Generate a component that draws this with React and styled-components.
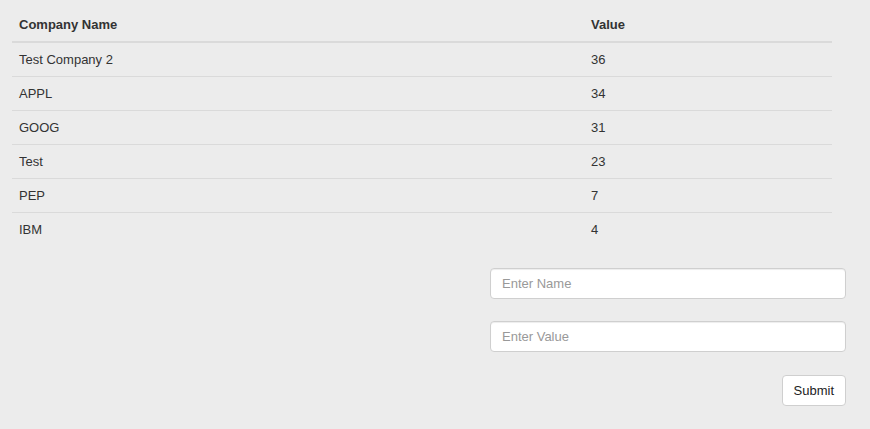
import React from "react";
import styled, { createGlobalStyle } from "styled-components";

const GlobalStyle = createGlobalStyle`
  html, body {
    margin: 0;
    padding: 0;
    background-color: #ececec;
  }
  body {
    font-family: "Liberation Sans", Arial, sans-serif;
    font-size: 13px;
    color: #333;
  }
`;

const Page = styled.div`
  padding: 8px 24px 20px 12px;
  display: flex;
  flex-direction: column;
`;

const Table = styled.table`
  width: 820px;
  border-collapse: collapse;
  border-spacing: 0;
`;

const HeadCell = styled.th`
  text-align: left;
  font-weight: bold;
  padding: 7px 7px;
  line-height: 19px;
  border-bottom: 2px solid #dadada;
  width: ${(props) => props.width || "auto"};
`;

const Row = styled.tr`
  & + & td {
    border-top: 1px solid #dadada;
  }
`;

const Cell = styled.td`
  padding: 7px 7px;
  line-height: 19px;
`;

const Form = styled.form`
  align-self: flex-end;
  width: 356px;
  margin-top: 22px;
  display: flex;
  flex-direction: column;
  align-items: flex-end;
  gap: 22px;
`;

const Input = styled.input`
  box-sizing: border-box;
  width: 100%;
  height: 31px;
  padding: 6px 11px;
  font-family: inherit;
  font-size: 13px;
  color: #555;
  background: #fff;
  border: 1px solid #cfcfcf;
  border-radius: 4px;
  box-shadow: inset 0 1px 1px rgba(0, 0, 0, 0.075);
  outline: none;

  &::placeholder {
    color: #999;
  }
`;

const Button = styled.button`
  box-sizing: border-box;
  height: 31px;
  margin-top: 1px;
  padding: 0 11px;
  font-family: inherit;
  font-size: 13px;
  color: #222;
  background: #fff;
  border: 1px solid #cfcfcf;
  border-radius: 4px;
  cursor: pointer;
`;

const companies = [
  { name: "Test Company 2", value: 36 },
  { name: "APPL", value: 34 },
  { name: "GOOG", value: 31 },
  { name: "Test", value: 23 },
  { name: "PEP", value: 7 },
  { name: "IBM", value: 4 },
];

const App = () => {
  return (
    <Page>
      <GlobalStyle />
      <Table>
        <thead>
          <tr>
            <HeadCell width="558px">Company Name</HeadCell>
            <HeadCell>Value</HeadCell>
          </tr>
        </thead>
        <tbody>
          {companies.map(({ name, value }) => (
            <Row key={name}>
              <Cell>{name}</Cell>
              <Cell>{value}</Cell>
            </Row>
          ))}
        </tbody>
      </Table>
      <Form onSubmit={(e) => e.preventDefault()}>
        <Input type="text" placeholder="Enter Name" />
        <Input type="text" placeholder="Enter Value" />
        <Button type="submit">Submit</Button>
      </Form>
    </Page>
  );
};

export default App;
